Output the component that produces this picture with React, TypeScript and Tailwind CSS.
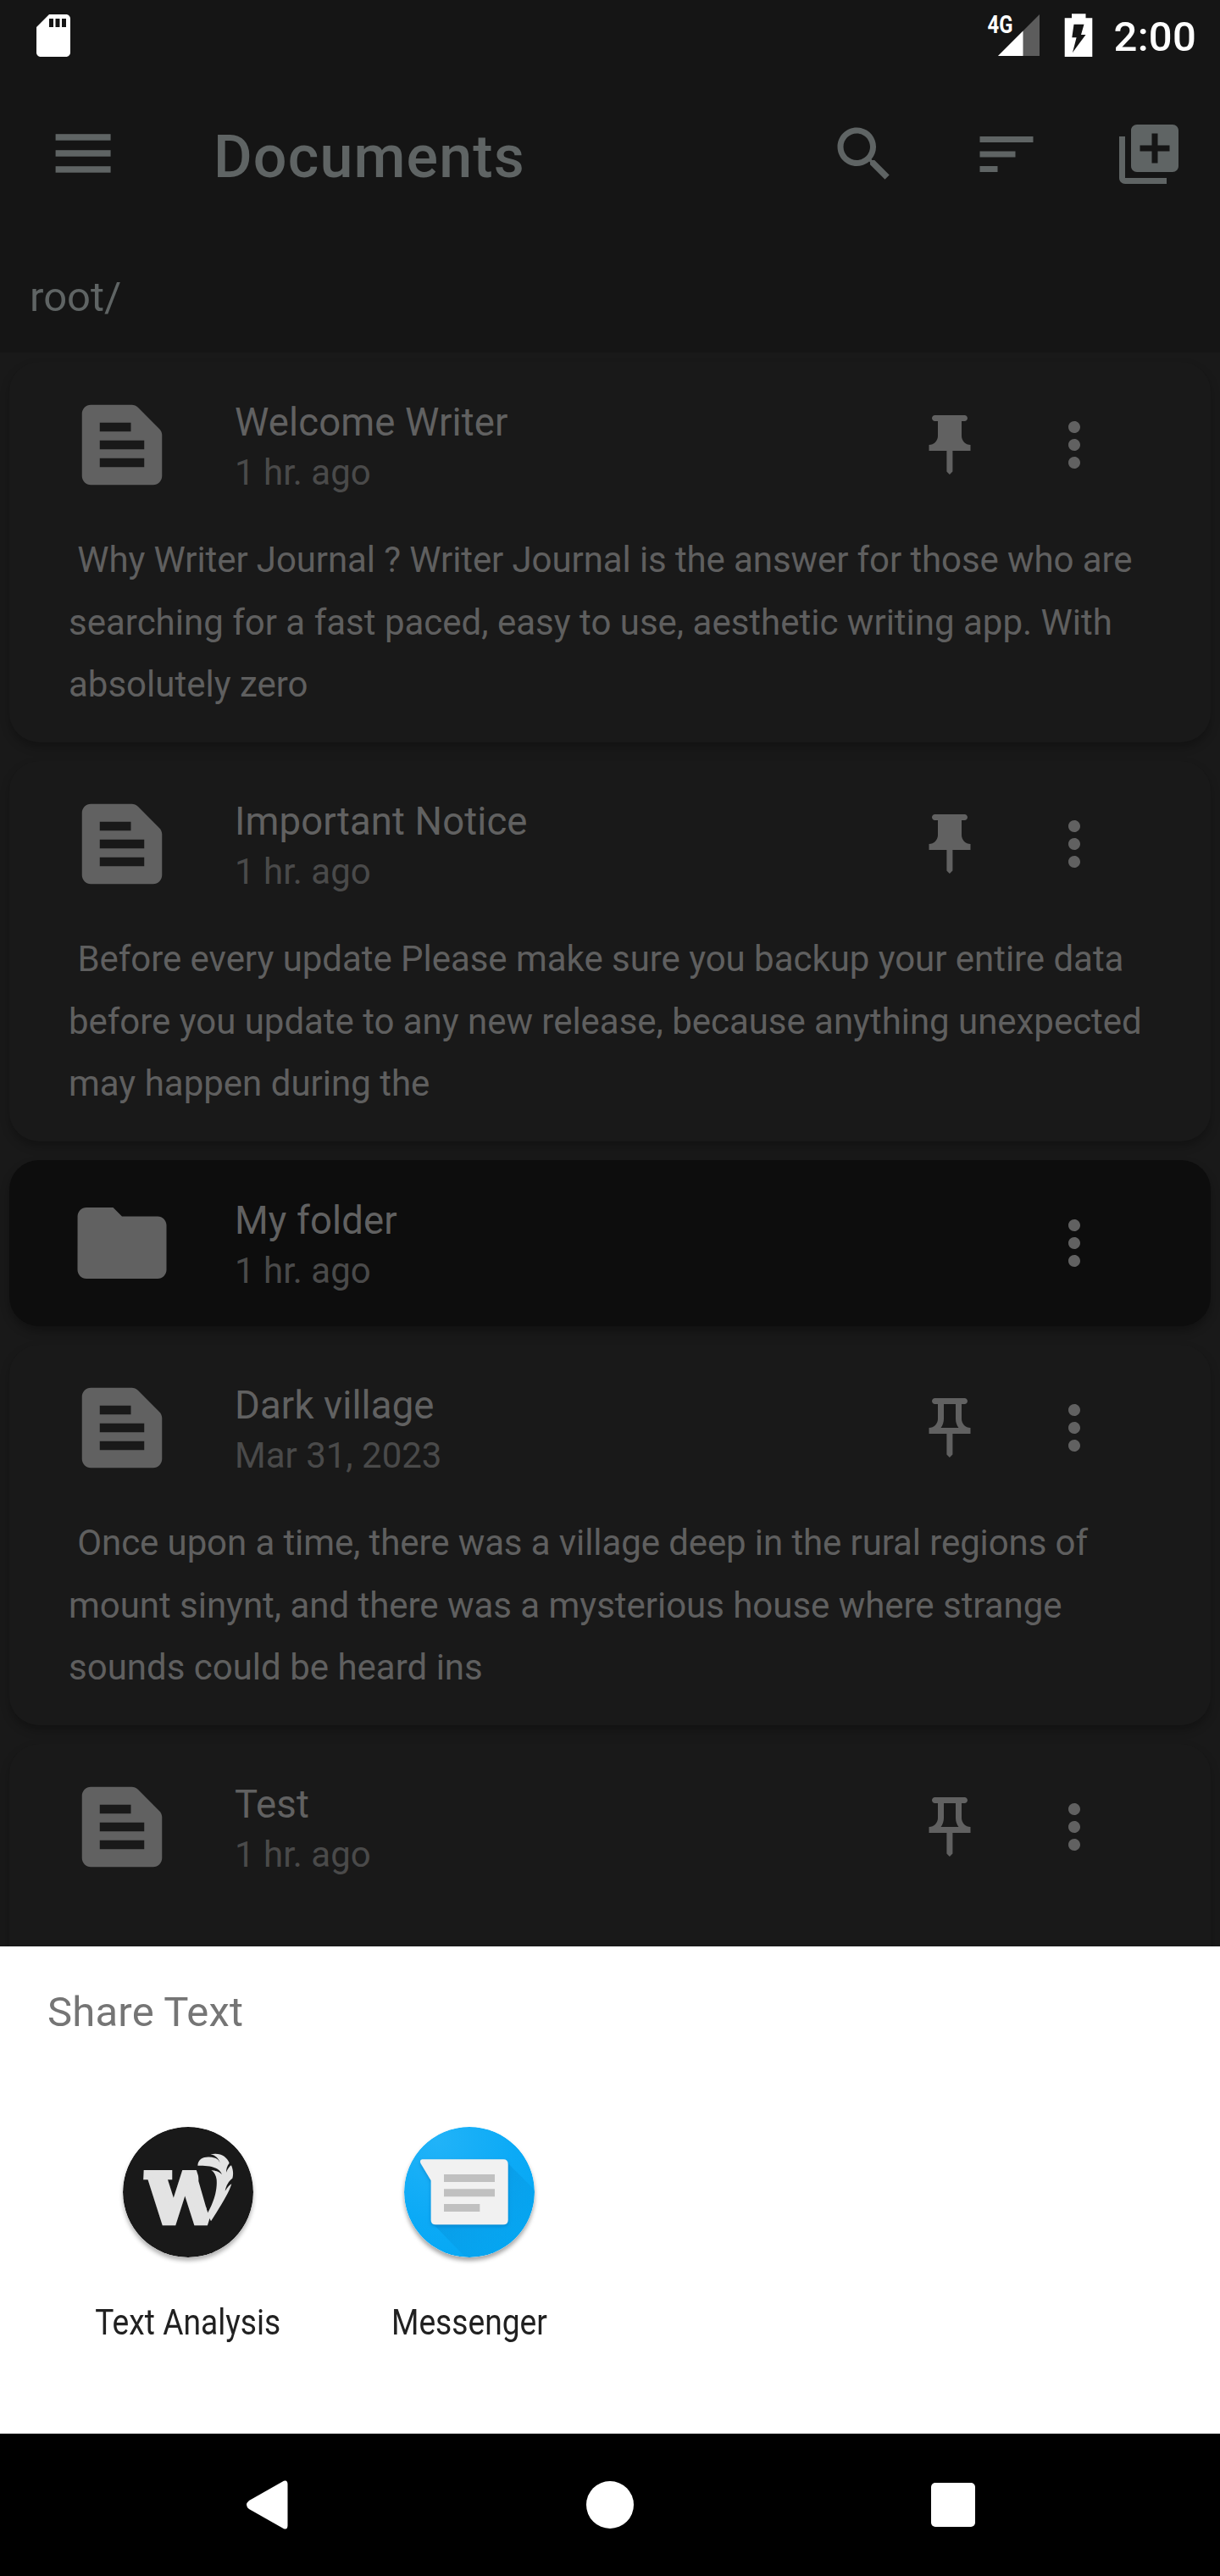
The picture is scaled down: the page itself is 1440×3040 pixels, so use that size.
import React from "react";

type IconProps = { d: string; className: string };

function Icon({ d, className }: IconProps) {
  return (
    <svg viewBox="0 0 24 24" fill="currentColor" className={className}>
      <path d={d} />
    </svg>
  );
}

const SD =
  "M18 2h-8L4.02 8 4 20c0 1.1.9 2 2 2h12c1.1 0 2-.9 2-2V4c0-1.1-.9-2-2-2zm-6 6h-2V4h2v4zm3 0h-2V4h2v4zm3 0h-2V4h2v4z";
const SEARCH =
  "M15.5 14h-.79l-.28-.27C15.41 12.59 16 11.11 16 9.5 16 5.91 13.09 3 9.5 3S3 5.91 3 9.5 5.91 16 9.5 16c1.61 0 3.09-.59 4.23-1.57l.27.28v.79l5 4.99L20.49 19l-4.99-5zm-6 0C7.01 14 5 11.99 5 9.5S7.01 5 9.5 5 14 7.01 14 9.5 11.99 14 9.5 14z";
const SORT = "M3 18h6v-2H3v2zM3 6v2h18V6H3zm0 7h12v-2H3v2z";
const LIBRARY_ADD =
  "M4 6H2v14c0 1.1.9 2 2 2h14v-2H4V6zm16-4H8c-1.1 0-2 .9-2 2v12c0 1.1.9 2 2 2h12c1.1 0 2-.9 2-2V4c0-1.1-.9-2-2-2zm-1 9h-4v4h-2v-4H9V9h4V5h2v4h4v2z";
const SNIPPET =
  "M20.41 8.41l-4.83-4.83C15.21 3.21 14.7 3 14.17 3H5C3.9 3 3 3.9 3 5v14c0 1.1.9 2 2 2h14c1.1 0 2-.9 2-2V9.83C21 9.3 20.79 8.79 20.41 8.41zM7 7h7v2H7V7zM17 17H7v-2h10V17zM17 13H7v-2h10V13z";
const FOLDER =
  "M10 4H4c-1.1 0-1.99.9-1.99 2L2 18c0 1.1.9 2 2 2h16c1.1 0 2-.9 2-2V8c0-1.1-.9-2-2-2h-8l-2-2z";
const MORE =
  "M12 8c1.1 0 2-.9 2-2s-.9-2-2-2-2 .9-2 2 .9 2 2 2zm0 2c-1.1 0-2 .9-2 2s.9 2 2 2 2-.9 2-2-.9-2-2-2zm0 6c-1.1 0-2 .9-2 2s.9 2 2 2 2-.9 2-2-.9-2-2-2z";
const PIN_FILLED =
  "M16 9V4h1c.55 0 1-.45 1-1s-.45-1-1-1H7c-.55 0-1 .45-1 1s.45 1 1 1h1v5c0 1.66-1.34 3-3 3v2h5.97v7l1 1 1-1v-7H19v-2c-1.66 0-3-1.34-3-3z";
const PIN_OUTLINE =
  "M14 4v5c0 1.12.37 2.16 1 3H9c.65-.86 1-1.9 1-3V4h4m3-2H7c-.55 0-1 .45-1 1s.45 1 1 1h1v5c0 1.66-1.34 3-3 3v2h5.97v7l1 1 1-1v-7H19v-2c-1.66 0-3-1.34-3-3V4h1c.55 0 1-.45 1-1s-.45-1-1-1z";

type Line = { text: string; className?: string };

type Entry = {
  title: string;
  date: string;
  kind: "doc" | "folder";
  pin?: "filled" | "outline";
  lines?: Line[];
};

const ENTRIES: Entry[] = [
  {
    title: "Welcome Writer",
    date: "1 hr. ago",
    kind: "doc",
    pin: "filled",
    lines: [
      {
        text: " Why Writer Journal ? Writer Journal is the answer for those who are",
        className: "tracking-[-0.1px]",
      },
      { text: "searching for a fast paced, easy to use, aesthetic writing app. With" },
      { text: "absolutely zero" },
    ],
  },
  {
    title: "Important Notice",
    date: "1 hr. ago",
    kind: "doc",
    pin: "filled",
    lines: [
      {
        text: " Before every update Please make sure you backup your entire data",
        className: "tracking-[-0.04px]",
      },
      {
        text: "before you update to any new release, because anything unexpected",
        className: "tracking-[-0.03px]",
      },
      { text: "may happen during the" },
    ],
  },
  { title: "My folder", date: "1 hr. ago", kind: "folder" },
  {
    title: "Dark village",
    date: "Mar 31, 2023",
    kind: "doc",
    pin: "outline",
    lines: [
      {
        text: " Once upon a time, there was a village deep in the rural regions of",
        className: "tracking-[-0.1px]",
      },
      {
        text: "mount sinynt, and there was a mysterious house where strange",
        className: "tracking-[-0.03px]",
      },
      { text: "sounds could be heard ins" },
    ],
  },
  { title: "Test", date: "1 hr. ago", kind: "doc", pin: "outline" },
];

function StatusBar() {
  return (
    <div className="flex h-[84px] items-center pl-[33px] pr-[28px] text-white">
      <Icon d={SD} className="size-[60px]" />
      <svg viewBox="0 0 64 84" className="ml-auto h-[84px] w-[64px]">
        <path d="M63 17V66H14z" fill="#5c5c5c" />
        <path d="M43.500 36.500V66H14z" fill="#fff" />
        <text
          x="1.5"
          y="39.3"
          fontFamily="Roboto, sans-serif"
          fontWeight="700"
          fontSize="29.5"
          textLength="30"
          lengthAdjust="spacingAndGlyphs"
          fill="#fff"
        >
          4G
        </text>
      </svg>
      <svg viewBox="0 0 34 84" className="ml-[28px] h-[84px] w-[34px]">
        <path
          fillRule="evenodd"
          d="M9 16.3h16.5v5H33.3V67H.7V21.3H9zM11.500 28.700L9.3 44.3H14.6L10 62L25.5 41H20L23.5 28.7z"
          fill="#fff"
        />
      </svg>
      <span className="ml-[25px] pt-[4px] text-[49px] leading-[60px] font-medium tracking-[0.25px]">
        2:00
      </span>
    </div>
  );
}

function Toolbar() {
  return (
    <div className="flex h-[196px] items-center pl-[65px] pr-[42px]">
      <svg viewBox="0 0 66 48" className="h-[48px] w-[66px]" fill="currentColor">
        <rect x="0.6" y="0.2" width="65" height="7.5" />
        <rect x="0.6" y="19.2" width="65" height="7.5" />
        <rect x="0.6" y="38.2" width="65" height="7.5" />
      </svg>
      <h1 className="ml-[121px] pt-[5px] text-[70px] leading-[84px] font-medium tracking-[1.15px]">
        Documents
      </h1>
      <div className="ml-auto flex gap-[84px]">
        <Icon d={SEARCH} className="size-[84px]" />
        <Icon d={SORT} className="size-[84px]" />
        <Icon d={LIBRARY_ADD} className="size-[84px]" />
      </div>
    </div>
  );
}

function Card({ entry }: { entry: Entry }) {
  const folder = entry.kind === "folder";
  return (
    <div
      className={
        folder
          ? "h-[196px] shrink-0 rounded-[35px] bg-[#0d0d0d] shadow-[0_6px_11px_rgba(0,0,0,0.3)]"
          : "h-[449px] shrink-0 rounded-[35px] bg-[#191919] shadow-[0_6px_11px_rgba(0,0,0,0.26)]"
      }
    >
      <div className="flex h-[196px] items-center pl-[70px] pr-[119px] text-[#616161]">
        <Icon d={folder ? FOLDER : SNIPPET} className="size-[126px] shrink-0" />
        <div className="flex h-full flex-col pt-[44px] pl-[70px]">
          <span className="text-[45.5px] leading-[56px] tracking-[0.13px]">{entry.title}</span>
          <span className="text-[42px] leading-[61px] text-[#4a4a4a]">{entry.date}</span>
        </div>
        <div className="ml-auto flex gap-[63px]">
          {entry.pin && (
            <Icon d={entry.pin === "filled" ? PIN_FILLED : PIN_OUTLINE} className="size-[84px]" />
          )}
          <Icon d={MORE} className="size-[84px]" />
        </div>
      </div>
      {entry.lines && (
        <div className="pt-px pl-[70px] text-[42px] leading-[73.5px] whitespace-pre text-[#5f5f5f]">
          {entry.lines.map((line) => (
            <p key={line.text} className={line.className}>
              {line.text}
            </p>
          ))}
        </div>
      )}
    </div>
  );
}

function WriterLogo() {
  return (
    <svg viewBox="75 58 462 462" className="size-[154px] rounded-full shadow-[0_4px_5px_rgba(0,0,0,0.3)]">
      <defs>
        <clipPath id="stem">
          <path d="M149 211H343V250L376 365L400 350L387 392L392 409H140z" />
        </clipPath>
      </defs>
      <circle cx="306" cy="289" r="231" fill="#191919" />
      <g fill="#e3e3e3">
        <text
          x="156"
          y="398"
          clipPath="url(#stem)"
          fontFamily="DejaVu Serif, serif"
          fontWeight="700"
          fontSize="241"
          textLength="278"
          lengthAdjust="spacingAndGlyphs"
          stroke="#e3e3e3"
          strokeWidth="20"
        >
          W
        </text>
        <path d="M340 195C342 165 372 160 402 168C411 171 416 178 419 185C414 168 400 157 385 155C420 148 443 163 452 186C444 196 441 206 441 219C446 207 452 198 459 194C466 210 467 226 463 240C450 250 441 264 437 285C444 274 452 264 460 260C450 292 430 325 387 392L374 365C397 325 410 282 407 245C405 230 399 218 388 212C405 212 418 218 426 227C417 201 385 194 340 195z" />
      </g>
    </svg>
  );
}

function MessengerLogo() {
  return (
    <svg viewBox="81 60 462 462" className="size-[154px] rounded-full shadow-[0_4px_5px_rgba(0,0,0,0.35)]">
      <defs>
        <radialGradient id="sky" cx="0.25" cy="0.1" r="1">
          <stop offset="0" stopColor="#21b3f8" />
          <stop offset="0.6" stopColor="#0caaf6" />
          <stop offset="1" stopColor="#05a8f4" />
        </radialGradient>
        <linearGradient id="cast" x1="0.2" y1="0.2" x2="0.8" y2="0.8">
          <stop offset="0" stopColor="#0277bd" stopOpacity="0.3" />
          <stop offset="1" stopColor="#0288d1" stopOpacity="0.05" />
        </linearGradient>
        <clipPath id="disc">
          <circle cx="312" cy="291" r="231" />
        </clipPath>
        <filter id="soft" x="-20%" y="-20%" width="140%" height="140%">
          <feDropShadow dx="0" dy="6" stdDeviation="6" floodColor="#01579b" floodOpacity="0.35" />
        </filter>
      </defs>
      <circle cx="312" cy="291" r="231" fill="url(#sky)" />
      <path d="M445 185L600 340V560H335L180 400z" fill="url(#cast)" clipPath="url(#disc)" />
      <path
        d="M145 175H432Q449 175 449 192V389Q449 406 432 406H193Q176 406 176 389V250L140 190Q134 177 145 175z"
        fill="#f1f1f1"
        filter="url(#soft)"
      />
      <path d="M222 228H402V255H222zM222 280H402V307H222zM222 333H349V360H222z" fill="#c0c0c0" />
    </svg>
  );
}

function ShareTarget({ label, children }: { label: string; children: React.ReactNode }) {
  return (
    <div className="flex w-[332px] flex-col items-center gap-[52px]">
      {children}
      <span className="scale-x-[0.885] text-[42px] leading-[50px] whitespace-nowrap text-[#212121]">
        {label}
      </span>
    </div>
  );
}

function ShareSheet() {
  return (
    <div className="h-[575px] bg-white px-[56px]">
      <p className="flex h-[155px] items-center text-[49px] tracking-[0.2px] text-[#757575]">
        Share Text
      </p>
      <div className="flex pt-[58px]">
        <ShareTarget label="Text Analysis">
          <WriterLogo />
        </ShareTarget>
        <ShareTarget label="Messenger">
          <MessengerLogo />
        </ShareTarget>
      </div>
    </div>
  );
}

function NavBar() {
  return (
    <div className="flex h-[168px] items-center justify-center bg-black">
      <div className="grid w-[1215px] grid-cols-3 place-items-center">
        <svg viewBox="0 0 50 58" className="h-[58px] w-[50px]" fill="#fff">
          <path d="M45 .8Q49.500-1 49.500 5V53Q49.500 59 45 57.200L4 34Q-2 29 4 24z" />
        </svg>
        <div className="size-[56px] rounded-full bg-white" />
        <div className="size-[52px] rounded-[5px] bg-white" />
      </div>
    </div>
  );
}

export default function App() {
  return (
    <div className="flex h-[3040px] w-[1440px] flex-col overflow-hidden bg-[#191919] font-[Roboto,sans-serif]">
      <header className="h-[416px] bg-[#151515] text-[#5f6464]">
        <StatusBar />
        <Toolbar />
        <p className="flex h-[136px] items-center pt-[5px] pl-[35px] text-[49px]">root/</p>
      </header>
      <main className="flex h-[1881px] flex-col gap-[22px] overflow-hidden px-[11px] pt-[11px]">
        {ENTRIES.map((e) => (
          <Card key={e.title} entry={e} />
        ))}
      </main>
      <ShareSheet />
      <NavBar />
    </div>
  );
}
